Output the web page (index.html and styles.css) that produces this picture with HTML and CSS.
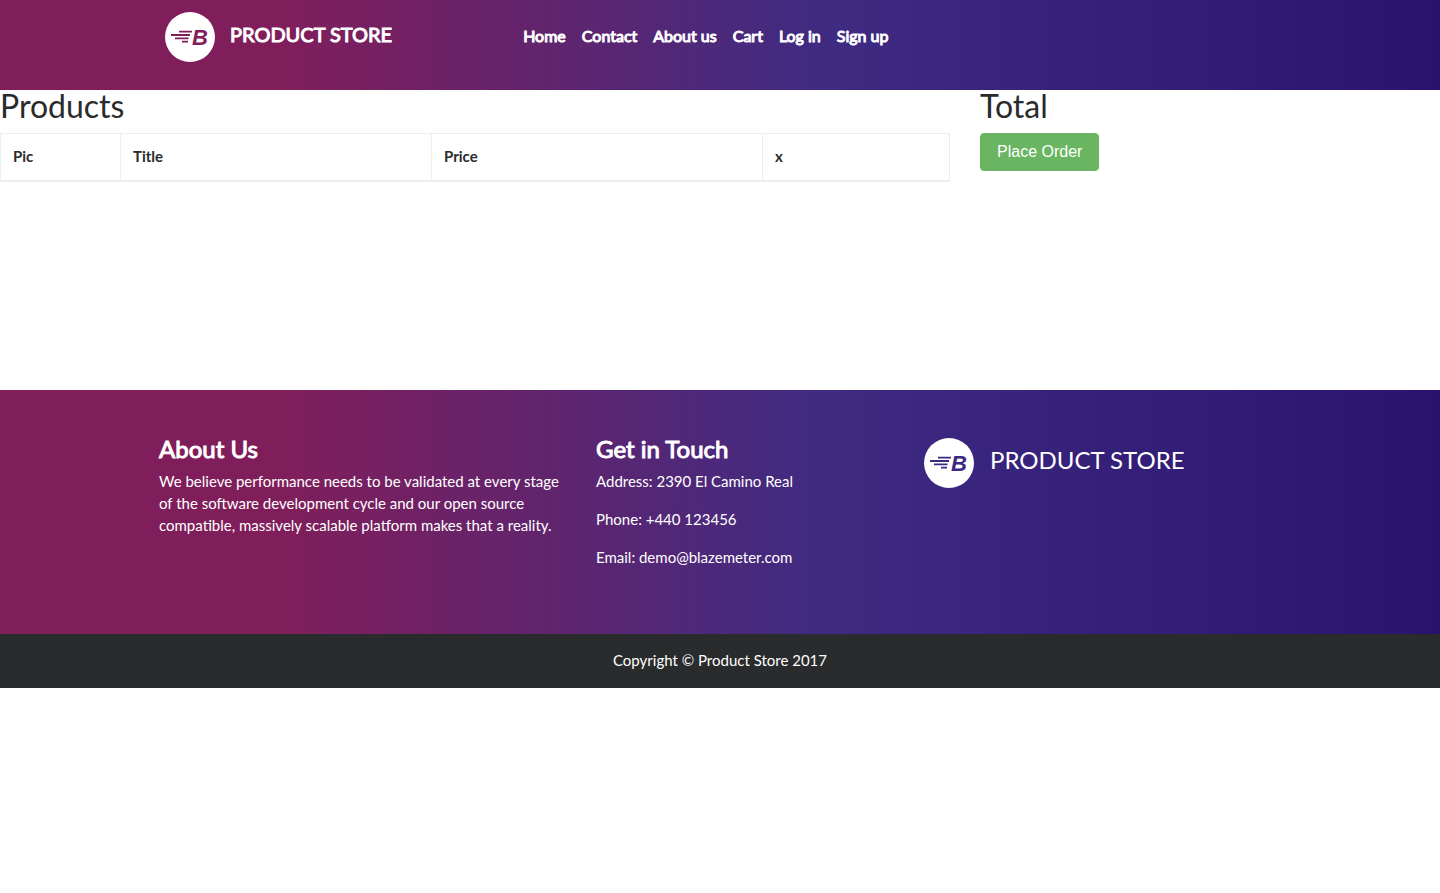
FILE: index.html
```html
<!DOCTYPE html>
<html lang="en">
<head>
<meta charset="utf-8">
<meta name="viewport" content="width=device-width, initial-scale=1">
<title>PRODUCT STORE</title>
<link rel="stylesheet" href="styles.css">
</head>
<body>
<header class="header">
  <a class="brand" href="#">
    <svg class="logo logo-plum" viewBox="0 0 50 50" aria-hidden="true">
      <circle cx="25" cy="25" r="25" fill="#fff"/>
      <path d="M14 19.700H27M6 23H25M10 26.300H23.500M17 29.700H23" stroke="currentColor" stroke-width="1.800" fill="none"/>
      <text class="logo-letter" x="27" y="33">B</text>
    </svg>
    <span>PRODUCT STORE</span>
  </a>
  <nav class="nav">
    <a href="#">Home</a>
    <a href="#">Contact</a>
    <a href="#">About us</a>
    <a href="#">Cart</a>
    <a href="#">Log in</a>
    <a href="#">Sign up</a>
  </nav>
</header>
<main class="main">
  <section class="products">
    <h2>Products</h2>
    <table class="table">
      <colgroup><col class="col-pic"><col class="col-title"><col class="col-price"><col></colgroup>
      <thead><tr><th>Pic</th><th>Title</th><th>Price</th><th>x</th></tr></thead>
      <tbody></tbody>
    </table>
  </section>
  <section class="total">
    <h2>Total</h2>
    <button class="btn" type="button">Place Order</button>
  </section>
</main>
<div class="info">
  <section class="about">
    <h4>About Us</h4>
    <p>We believe performance needs to be validated at every stage of the software development cycle and our open source compatible, massively scalable platform makes that a reality.</p>
  </section>
  <section class="touch">
    <h4>Get in Touch</h4>
    <p>Address: 2390 El Camino Real</p>
    <p>Phone: +440 123456</p>
    <p>Email: demo@blazemeter.com</p>
  </section>
  <div class="store">
    <svg class="logo logo-indigo" viewBox="0 0 50 50" aria-hidden="true">
      <circle cx="25" cy="25" r="25" fill="#fff"/>
      <path d="M14 19.700H27M6 23H25M10 26.300H23.500M17 29.700H23" stroke="currentColor" stroke-width="1.800" fill="none"/>
      <text class="logo-letter" x="27" y="33">B</text>
    </svg>
    <span>PRODUCT STORE</span>
  </div>
</div>
<footer class="footer"><p>Copyright © Product Store 2017</p></footer>
</body>
</html>
```
FILE: styles.css
```css
* { box-sizing: border-box; }
body { margin: 0; background: #fff; color: #292b2c; font: 15px/22px Lato, sans-serif; }
h2, h4, p { margin: 0; }
a { color: inherit; text-decoration: none; }

.logo { width: 50px; height: 50px; flex: none; }
.logo-plum { color: #801e5c; }
.logo-indigo { color: #3b2880; }
.logo-letter { font: italic bold 22px "Liberation Sans", sans-serif; fill: currentColor; }

.header, .info {
  color: #fff;
  background: linear-gradient(to right, #801e5b 0%, #801e5b 20%, #3f2b82 57%, #29136f 100%);
}
.header { display: flex; align-items: flex-start; height: 90px; padding: 12px 165px 0; }
.brand { display: flex; gap: 15px; margin-right: 131px; font-size: 20px; line-height: 44px; -webkit-text-stroke: 1px; }
.brand .logo, .store .logo { -webkit-text-stroke: 0; }
.nav { display: flex; gap: 16px; font-size: 16px; line-height: 24px; padding-top: 12px; -webkit-text-stroke: 1px; }

.main { display: grid; grid-template-columns: 950fr 460fr; gap: 30px; min-height: 300px; }
h2 { font-size: 32px; line-height: 31px; font-weight: 400; margin-bottom: 12px; }
.table { width: 100%; table-layout: fixed; border-collapse: collapse; }
.table th { height: 47px; padding: 11px 12px; line-height: 22px; text-align: left; vertical-align: top; font-weight: 700; border: 1px solid #eceeef; border-bottom-width: 2px; }
.col-pic { width: 120px; }
.col-title { width: 311px; }
.col-price { width: 331px; }
.btn { height: 38px; padding: 0 16px; border: 1px solid #6ab562; border-radius: 4px; background: #6ab562; color: #fff; font: 16px "Liberation Sans", sans-serif; }

.info { display: flex; min-height: 244px; padding: 48px 159px 0; }
.about { width: 412px; margin-right: 25px; }
.touch { width: 328px; }
.info h4 { font-size: 24px; line-height: 22px; font-weight: 400; margin-bottom: 10px; -webkit-text-stroke: 1px; }
.touch p { margin-bottom: 16px; }
.store { display: flex; gap: 16px; font-size: 24px; line-height: 44px; }
.footer { padding: 15px 16px 17px; background: #292b2c; color: #fff; text-align: center; }
```
